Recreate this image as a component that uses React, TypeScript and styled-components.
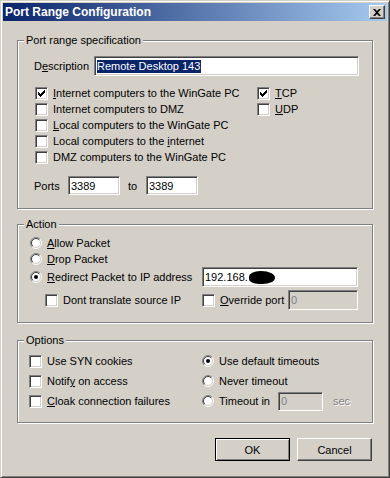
import styled, { createGlobalStyle } from 'styled-components';

const GlobalStyle = createGlobalStyle`
  html, body {
    margin: 0;
    padding: 0;
    background: #d4d0c8;
  }
  body {
    font-family: "Liberation Sans", Arial, sans-serif;
    font-size: 11px;
    color: #000;
  }
  *, *::before, *::after {
    box-sizing: border-box;
  }
`;

const Window = styled.div`
  width: 390px;
  height: 478px;
  display: flex;
  flex-direction: column;
  padding: 2px;
  background: #d4d0c8;
  border: 1px solid;
  border-color: #d4d0c8 #404040 #404040 #d4d0c8;
  box-shadow: inset 1px 1px 0 #fff, inset -1px -1px 0 #808080;
`;

const TitleBar = styled.div`
  flex: none;
  height: 18px;
  display: flex;
  align-items: center;
  justify-content: space-between;
  padding: 0 2px;
  background: linear-gradient(to right, #0a246a, #a6caf0);
`;

const Title = styled.span`
  color: #fff;
  font-weight: bold;
  font-size: 12px;
`;

const CloseButton = styled.span`
  width: 16px;
  height: 14px;
  display: flex;
  align-items: center;
  justify-content: center;
  background: #d4d0c8;
  border: 1px solid;
  border-color: #fff #404040 #404040 #fff;
  box-shadow: inset -1px -1px 0 #808080;
`;

const Body = styled.div`
  display: flex;
  flex-direction: column;
  padding: 13px 14px 0;
`;

const Group = styled.fieldset<{ $mt?: number }>`
  margin: ${(p) => p.$mt ?? 0}px 0 0;
  padding: 0;
  min-width: 0;
  border: 1px solid #808080;
  box-shadow: inset 1px 1px 0 #fff, 1px 1px 0 #fff;
`;

const Legend = styled.legend`
  margin-left: 6px;
  padding: 0 2px;
  line-height: 13px;
  background: #d4d0c8;
`;

const GroupBody = styled.div<{ $pad: string }>`
  padding: ${(p) => p.$pad};
`;

const Row = styled.div<{ $h: number; $mt?: number }>`
  display: flex;
  align-items: center;
  height: ${(p) => p.$h}px;
  margin-top: ${(p) => p.$mt ?? 0}px;
`;

const Columns = styled.div`
  display: flex;
  margin: 9px 0 0 1px;
`;

const Column = styled.div<{ $w?: number }>`
  display: flex;
  flex-direction: column;
  width: ${(p) => (p.$w ? `${p.$w}px` : 'auto')};
`;

const Caption = styled.span<{ $w?: number; $ml?: number; $muted?: boolean }>`
  flex: none;
  width: ${(p) => (p.$w ? `${p.$w}px` : 'auto')};
  margin-left: ${(p) => p.$ml ?? 0}px;
  color: ${(p) => (p.$muted ? '#808080' : '#000')};
  text-shadow: ${(p) => (p.$muted ? '1px 1px 0 #fff' : 'none')};
  white-space: nowrap;
`;

const Item = styled.label<{ $w?: number; $ml?: number }>`
  flex: none;
  display: flex;
  align-items: center;
  gap: 5px;
  width: ${(p) => (p.$w ? `${p.$w}px` : 'auto')};
  margin-left: ${(p) => p.$ml ?? 0}px;
  white-space: nowrap;
`;

const Box = styled.span`
  flex: none;
  width: 13px;
  height: 13px;
  display: flex;
  align-items: center;
  justify-content: center;
  background: #fff;
  border: 1px solid;
  border-color: #808080 #fff #fff #808080;
  box-shadow: inset 1px 1px 0 #404040, inset -1px -1px 0 #d4d0c8;
`;

const RadioSvg = styled.svg`
  flex: none;
  display: block;
`;

const Field = styled.div<{ $w: number; $h?: number; $disabled?: boolean }>`
  flex: none;
  width: ${(p) => p.$w}px;
  height: ${(p) => p.$h ?? 20}px;
  display: flex;
  align-items: center;
  padding: 0 2px;
  overflow: hidden;
  white-space: nowrap;
  background: ${(p) => (p.$disabled ? '#d4d0c8' : '#fff')};
  color: ${(p) => (p.$disabled ? '#808080' : '#000')};
  border: 1px solid;
  border-color: #808080 #fff #fff #808080;
  box-shadow: inset 1px 1px 0 #404040, inset -1px -1px 0 #d4d0c8;
`;

const Selected = styled.span`
  background: #0a246a;
  color: #fff;
  line-height: 13px;
  padding-right: 1px;
`;

const Blot = styled.span`
  flex: none;
  width: 26px;
  height: 13px;
  margin-left: 1px;
  background: #000;
  border-radius: 45% 55% 50% 40%;
`;

const Push = styled.span`
  margin-left: auto;
`;

const Actions = styled.div`
  display: flex;
  justify-content: flex-end;
  gap: 7px;
  margin-top: 15px;
  padding-right: 1px;
`;

const Button = styled.button<{ $default?: boolean }>`
  width: 75px;
  height: 23px;
  padding: 0;
  font: inherit;
  color: #000;
  background: #d4d0c8;
  border: 1px solid;
  border-color: ${(p) => (p.$default ? '#000' : '#fff #404040 #404040 #fff')};
  box-shadow: ${(p) =>
    p.$default
      ? 'inset 1px 1px 0 #fff, inset -1px -1px 0 #808080'
      : 'inset -1px -1px 0 #808080'};
`;

function CheckBox({ checked }: { checked?: boolean }) {
  return (
    <Box>
      {checked && (
        <svg width="7" height="7" viewBox="0 0 7 7">
          <path
            d="M0 2h1v3H0zM1 3h1v3H1zM2 4h1v3H2zM3 3h1v3H3zM4 2h1v3H4zM5 1h1v3H5zM6 0h1v3H6z"
            fill="#000"
          />
        </svg>
      )}
    </Box>
  );
}

function Radio({ checked }: { checked?: boolean }) {
  return (
    <RadioSvg width="12" height="12" viewBox="0 0 12 12">
      <circle cx="6" cy="6" r="4.5" fill="#fff" />
      <path d="M9.889 2.111A5.5 5.5 0 0 0 2.111 9.889" stroke="#808080" fill="none" />
      <path d="M2.111 9.889A5.5 5.5 0 0 0 9.889 2.111" stroke="#fff" fill="none" />
      <path d="M9.182 2.818A4.5 4.5 0 0 0 2.818 9.182" stroke="#404040" fill="none" />
      <path d="M2.818 9.182A4.5 4.5 0 0 0 9.182 2.818" stroke="#d4d0c8" fill="none" />
      {checked && <circle cx="6" cy="6" r="2" fill="#000" />}
    </RadioSvg>
  );
}

export default function App() {
  return (
    <>
      <GlobalStyle />
      <Window>
        <TitleBar>
          <Title>Port Range Configuration</Title>
          <CloseButton>
            <svg width="8" height="7" viewBox="0 0 8 7">
              <path d="M0 0h2l2 2 2-2h2L5 3.5 8 7H6L4 5 2 7H0l3-3.5z" fill="#000" />
            </svg>
          </CloseButton>
        </TitleBar>

        <Body>
          <Group>
            <Legend>Port range specification</Legend>
            <GroupBody $pad="9px 0 13px 16px">
              <Row $h={20}>
                <Caption $w={60}>
                  D<u>e</u>scription
                </Caption>
                <Field $w={265}>
                  <Selected>Remote Desktop 143</Selected>
                </Field>
              </Row>

              <Columns>
                <Column $w={222}>
                  <Row $h={16}>
                    <Item>
                      <CheckBox checked />
                      <span>
                        <u>I</u>nternet computers to the WinGate PC
                      </span>
                    </Item>
                  </Row>
                  <Row $h={16}>
                    <Item>
                      <CheckBox />
                      <span>Internet computers to DMZ</span>
                    </Item>
                  </Row>
                  <Row $h={16}>
                    <Item>
                      <CheckBox />
                      <span>
                        <u>L</u>ocal computers to the WinGate PC
                      </span>
                    </Item>
                  </Row>
                  <Row $h={16}>
                    <Item>
                      <CheckBox />
                      <span>
                        Local computers to the <u>i</u>nternet
                      </span>
                    </Item>
                  </Row>
                  <Row $h={16}>
                    <Item>
                      <CheckBox />
                      <span>DMZ computers to the WinGate PC</span>
                    </Item>
                  </Row>
                </Column>
                <Column>
                  <Row $h={16}>
                    <Item>
                      <CheckBox checked />
                      <span>
                        <u>T</u>CP
                      </span>
                    </Item>
                  </Row>
                  <Row $h={16}>
                    <Item>
                      <CheckBox />
                      <span>
                        <u>U</u>DP
                      </span>
                    </Item>
                  </Row>
                </Column>
              </Columns>

              <Row $h={19} $mt={11}>
                <Caption $w={34}>Ports</Caption>
                <Field $w={52} $h={19}>
                  3389
                </Field>
                <Caption $w={18} $ml={8}>
                  to
                </Caption>
                <Field $w={52} $h={19}>
                  3389
                </Field>
              </Row>
            </GroupBody>
          </Group>

          <Group $mt={9}>
            <Legend>Action</Legend>
            <GroupBody $pad="3px 14px 12px 12px">
              <Row $h={17}>
                <Item>
                  <Radio />
                  <span>
                    <u>A</u>llow Packet
                  </span>
                </Item>
              </Row>
              <Row $h={16}>
                <Item>
                  <Radio />
                  <span>
                    <u>D</u>rop Packet
                  </span>
                </Item>
              </Row>
              <Row $h={20}>
                <Item $w={172}>
                  <Radio checked />
                  <span>
                    <u>R</u>edirect Packet to IP address
                  </span>
                </Item>
                <Field $w={156}>
                  192.168.
                  <Blot />
                </Field>
              </Row>
              <Row $h={20} $mt={3}>
                <Item $w={157} $ml={15}>
                  <CheckBox />
                  <span>Dont translate source IP</span>
                </Item>
                <Item>
                  <CheckBox />
                  <span>
                    <u>O</u>verride port
                  </span>
                </Item>
                <Push />
                <Field $w={70} $disabled>
                  0
                </Field>
              </Row>
            </GroupBody>
          </Group>

          <Group $mt={11}>
            <Legend>Options</Legend>
            <GroupBody $pad="4px 14px 11px 11px">
              <Row $h={20}>
                <Item $w={173}>
                  <CheckBox />
                  <span>Use SYN cookies</span>
                </Item>
                <Item>
                  <Radio checked />
                  <span>Use default timeouts</span>
                </Item>
              </Row>
              <Row $h={20}>
                <Item $w={173}>
                  <CheckBox />
                  <span>
                    Notif<u>y</u> on access
                  </span>
                </Item>
                <Item>
                  <Radio />
                  <span>Never timeout</span>
                </Item>
              </Row>
              <Row $h={20}>
                <Item $w={173}>
                  <CheckBox />
                  <span>
                    <u>C</u>loak connection failures
                  </span>
                </Item>
                <Item $w={76}>
                  <Radio />
                  <span>Timeout in</span>
                </Item>
                <Field $w={45} $h={19} $disabled>
                  0
                </Field>
                <Caption $ml={10} $muted>
                  sec
                </Caption>
              </Row>
            </GroupBody>
          </Group>

          <Actions>
            <Button $default>OK</Button>
            <Button>Cancel</Button>
          </Actions>
        </Body>
      </Window>
    </>
  );
}
